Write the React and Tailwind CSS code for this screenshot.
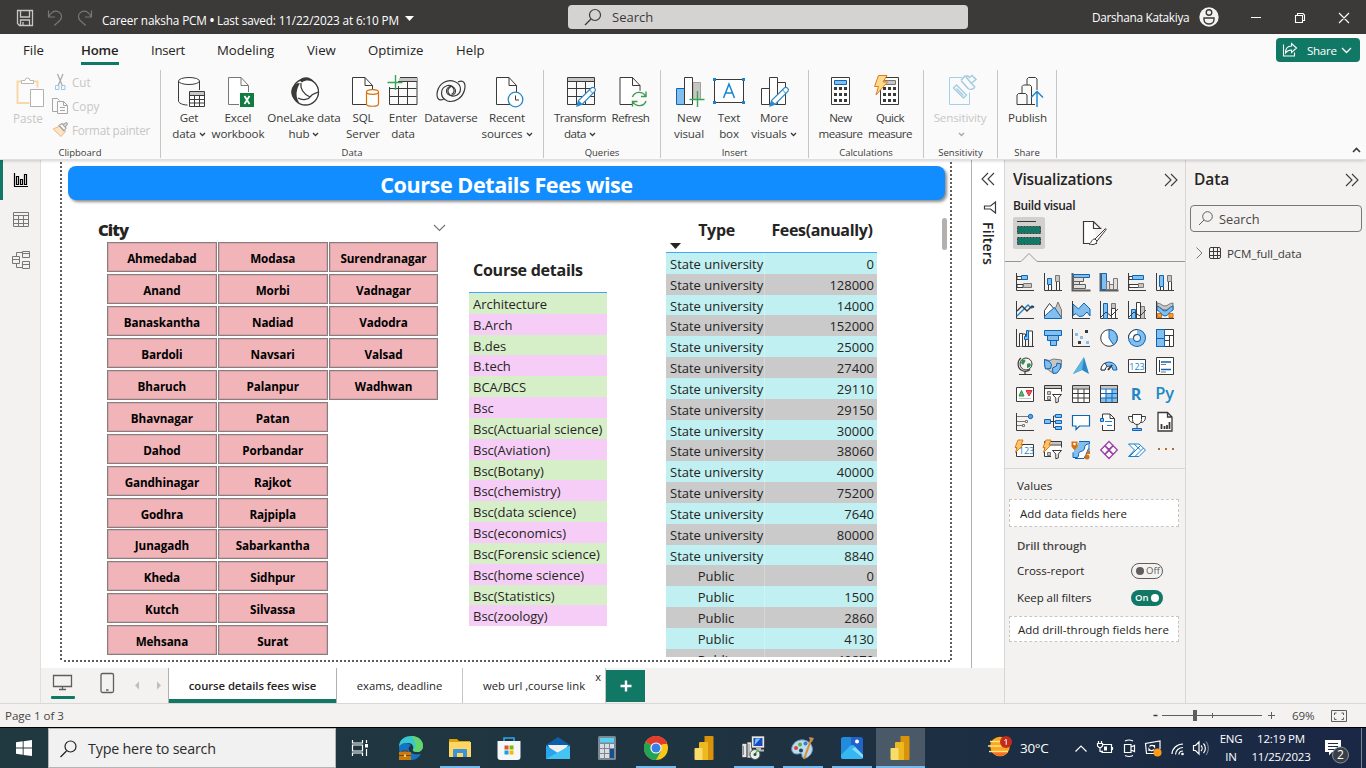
import React from "react";

const D = "#3b3a39";
const B = "#0a66b8";
const LB = "#83beec";
const G = "#797775";
const LG = "#c8c6c4";

/* Icon canvas: (x, y) is the origin of the drawing's own coordinates. */
function Ic({ x = 0, y = 0, w, h, className = "", children }) {
  return (
    <svg
      className={"shrink-0 " + className}
      width={w}
      height={h}
      viewBox={`${x} ${y} ${w} ${h}`}
      fill="none"
    >
      {children}
    </svg>
  );
}

/* ---------- title bar ---------- */
function TitleBar() {
  return (
    <div className="flex h-[34px] shrink-0 items-center bg-[#3b3a39] text-white">
      <Ic x={0} y={0} w={102} h={34}>
        <path d="M17.5 10.5h15v15h-13l-2-2z M20.5 10.5v6.500h9v-6.500 M20.500 25.500v-5.500h9v5.500 M23 25v-3" stroke="#c8c6c4" strokeWidth="1.300" />
        <path d="M48.500 10.500v6.500h6.500 M48.800 16.500c3-5 7-6 10-4.500c3.500 2 3.500 6 1 8.500l-5.500 5" stroke="#797775" strokeWidth="1.200" />
        <path d="M91.500 10.500v6.500h-6.500 M91.200 16.500c-3-5-7-6-10-4.500c-3.500 2-3.500 6-1 8.500l5.500 5" stroke="#797775" strokeWidth="1.200" />
      </Ic>
      <span className="w-[303px] pt-[6px] text-[11.8px] leading-4 whitespace-nowrap tracking-[-0.16px]">
        Career naksha PCM&nbsp;<span className="font-bold">•</span>&nbsp;Last saved: 11/22/2023 at 6:10 PM
      </span>
      <Ic w={10} h={6} className="mt-[3px]"><path d="M0 0h9L4.500 5z" fill="#fff" /></Ic>
      <div className="ml-[153px] flex h-[24px] w-[400px] items-center rounded-sm bg-[#d4d3d1] text-[#3b3a39]">
        <Ic w={44} h={24}>
          <circle cx="27" cy="10" r="5.500" stroke={D} strokeWidth="1.200" />
          <path d="M23 14l-6 6" stroke={D} strokeWidth="1.200" />
        </Ic>
        <span className="pt-px text-[13px]">Search</span>
      </div>
      <span className="ml-[124px] w-[107px] pt-px text-[11.8px] whitespace-nowrap tracking-[-0.3px]">Darshana Katakiya</span>
      <Ic x={1199} y={0} w={167} h={34}>
        <circle cx="1209" cy="17" r="9.700" fill="#f3f2f1" />
        <circle cx="1209" cy="12.500" r="2.800" stroke={D} strokeWidth="1.400" />
        <path d="M1204 18h10v1.500a5 4.500 0 0 1-10 0z" stroke={D} strokeWidth="1.400" />
        <path d="M1251 17.500h10 M1295.500 15.500h7v7h-7z M1297.500 15v-1.500h5.500l1.500 1.500v5.500h-1.500 M1339 13l10 10 M1349 13l-10 10" stroke="#fff" strokeWidth="1.100" />
      </Ic>
    </div>
  );
}

/* ---------- ribbon ---------- */
function Tabs() {
  return (
    <div className="flex h-9 text-[13.200px] text-[#252423]">
      <div className="flex pl-[23px] pt-[7px] leading-[18px]">
        <span className="w-[58px]">File</span>
        <span className="w-[70px]">
          <span className="inline-block h-[24px] w-[38px] border-b-[3px] border-[#117865] font-semibold tracking-[-0.2px]">Home</span>
        </span>
        <span className="w-[66px] tracking-[-0.25px]">Insert</span>
        <span className="w-[90px]">Modeling</span>
        <span className="w-[61px]">View</span>
        <span className="w-[88px]">Optimize</span>
        <span>Help</span>
      </div>
      <div className="mt-1 mr-1.5 ml-auto flex h-6 w-[84px] items-center rounded bg-[#117865] text-[11.600px] text-white">
        <Ic x={1276} y={38} w={31} h={24}>
          <path d="M1283.500 44.500v11.500h11v-3.500 M1291.500 43.500l5 4.500-5 4.500v-2.500c-3 0-4.500 1-6 3 0-4 2-7 6-7z" stroke="#fff" strokeWidth="1.100" />
        </Ic>
        <span className="w-[34px] pt-px tracking-[-0.3px]">Share</span>
        <Ic w={11} h={7}><path d="M1 1l4.500 4.500L10 1" stroke="#fff" strokeWidth="1.300" /></Ic>
      </div>
    </div>
  );
}

function Chevron({ c = D }) {
  return (
    <Ic w={7} h={5} className="mb-px ml-[3px] inline"><path d="M1 1l2.500 2.500L6 1" stroke={c} strokeWidth="1.300" /></Ic>
  );
}

function Item({ w, cx, a, b, arrow, muted, tight, children }) {
  return (
    <div className={`flex ${w} flex-col items-center pt-1 text-[11.600px] leading-4 whitespace-nowrap ${tight ? "tracking-[-0.5px]" : "tracking-[-0.13px]"} ${muted ? "text-[#c8c6c4]" : "text-[#3b3a39]"}`}>
      <Ic x={cx - 22} y={74} w={44} h={36}>{children}</Ic>
      <span>{a}</span>
      <span className="h-4">{b}{arrow && <Chevron c={muted ? "#a8a6a4" : D} />}</span>
    </div>
  );
}

function Group({ w, label, pad = "pr-px", children }) {
  return (
    <div className={`flex h-[88px] ${w} shrink-0 flex-col border-r border-[#c8c6c4]`}>
      <div className={`flex h-[76px] shrink-0 justify-center ${pad}`}>{children}</div>
      <div className="text-center text-[9.500px] leading-[14px] text-[#3b3a39]">{label}</div>
    </div>
  );
}

const doc = (x) => `M${x} 77.500h12.500l7.500 8v19h-20z M${x + 12.5} 77.500v8h7.500`;

function Pencil({ x, y }) {
  return (
    <g transform={`translate(${x} ${y})`}>
      <path d="M1 19l1.500-5.500L15.500.8c2-1.500 5 1.200 3.500 3.400L6.500 17z" fill="#fff" stroke="#2b88c8" strokeWidth="1.200" />
      <path d="M1 19l1.500-5.500 4 3.500z" fill="#2b88c8" />
      <path d="M13.500 3l3.500 3.500" stroke="#2b88c8" />
    </g>
  );
}

function Calc({ x, top = LB, ts = B }) {
  return (
    <g>
      <path d={`M${x + 0.5} 77.500h18v27h-18z`} fill="#fff" stroke={D} />
      <path d={`M${x + 3.5} 80.500h12v4h-12z`} fill={top} stroke={ts} />
      <path d={`M${x + 3} 88.500h13 M${x + 3} 94.500h13 M${x + 3} 100.500h13`} stroke={D} strokeWidth="3" strokeDasharray="3 2" />
    </g>
  );
}

function Ribbon() {
  return (
    <div className="relative z-10 h-[126px] shrink-0 border-b border-[#e1dfdd] bg-[#fafafa] shadow-[0_1px_3px_rgba(0,0,0,0.18)]">
      <Tabs />
      <div className="flex h-[88px]">
        <Group w="w-[161px]" label="Clipboard">
          <div className="flex w-[50px] flex-col items-center pt-1 pl-[6px] text-[11.700px] leading-4 text-[#c8c6c4]">
            <Ic x={6} y={74} w={44} h={36}>
              <path d="M24 81.500h-6.500v21.500h12 M31 81.500h6.500v6" stroke="#f8d7a8" strokeWidth="2" />
              <path d="M21.500 83.500v-3h3.500a2.500 2.500 0 0 1 5 0h3.500v3z" stroke="#b9b7b5" fill="#fff" />
              <path d="M30.500 89.500h13v17h-13z" stroke="#b3b1af" fill="#fff" />
            </Ic>
            <span>Paste</span>
          </div>
          <div className="flex flex-1 flex-col pt-px text-[11.700px] text-[#c8c6c4]">
            <div className="flex h-6 items-center">
              <Ic x={50} y={71} w={22} h={24}>
                <path d="M57.500 74l5 12 M63 74l-5 12" stroke="#a8a6a4" strokeWidth="1.200" />
                <path d="M55.500 85.500h3.500v4h-3.500z M61.500 85.500h3.500v4h-3.500z" stroke="#9cc7e4" />
              </Ic>Cut
            </div>
            <div className="flex h-6 items-center">
              <Ic x={50} y={95} w={22} h={24}>
                <path d="M58 111.500h-5.500v-13h5l2 2" stroke="#a8a6a4" />
                <path d="M57.500 101.500h6l4 4v8h-10z M63.500 101.500v4h4 M60 107.500h5 M60 110.500h5" stroke="#a8a6a4" />
              </Ic>Copy
            </div>
            <div className="flex h-6 items-center whitespace-nowrap tracking-[-0.25px]">
              <Ic x={50} y={119} w={22} h={24}>
                <path d="M53 129l7-3 5.500 5.500-4.500 5z" fill="#fbe3c3" stroke="#efb98a" />
                <path d="M59 125.500l3-2 4 4.500-2 3z M63.500 124l3.500-1.500 M63 125l3.500-2.500 1 1.500-2.500 3" stroke="#a8a6a4" strokeWidth="1.200" />
              </Ic>Format painter
            </div>
          </div>
        </Group>
        <Group w="w-[383px]" label="Data" pad="pr-0.5">
          <Item w="w-[44px]" cx={189} a="Get" b="data" arrow>
            <path d="M178.500 81v20c0 2 4 4 9 4 M199.500 81v9" stroke={D} />
            <ellipse cx="189" cy="81" rx="10.500" ry="3.500" stroke={D} fill="#fff" />
            <path d="M189.500 91.500h15v15h-15z" fill="#fff" stroke={D} />
            <path d="M190 92h14v3h-14z" fill={LG} />
            <path d="M189.500 95.500h15 M189.500 99.500h15 M189.500 103h15 M194.500 95v11 M199.500 95v11" stroke={D} />
          </Item>
          <Item w="w-[54px]" cx={238} a="Excel" b="workbook">
            <path d={doc(228.5)} stroke={G} fill="#fff" />
            <path d="M239.500 92.500h15v15h-15z" fill="#107c41" stroke="#fafafa" />
            <path d="M244.500 96l5 8 M249.500 96l-5 8" stroke="#fff" strokeWidth="1.800" />
          </Item>
          <Item w="w-[78px]" cx={304} a="OneLake data" b="hub" arrow>
            <circle cx="305.500" cy="92" r="13" stroke={D} strokeWidth="1.300" fill="#fff" />
            <path d="M299.500 80.500c3-4.500 11-4.500 14.500 1.500-4-2-9-2-12 .5z" fill={D} />
            <path d="M298 83c-6 2-8.500 8-5.500 14 1.500 3 4 4.500 6.500 5.500-2.500-4-3-9-2-12 .5-3 1.500-5 3-7z" fill={D} />
            <path d="M301 83c-1 5 2 11 9 14 3-4 5-3 8-5 M298 98c5 3 11 1 12-1" stroke={D} strokeWidth="1.300" />
          </Item>
          <Item w="w-[40px]" cx={363} a="SQL" b="Server">
            <path d={doc(352.5)} stroke={D} fill="#fff" />
            <path d="M366.500 92v12c0 3 12 3 12 0v-12" stroke="#d8700c" strokeWidth="1.200" fill="#fff" />
            <ellipse cx="372.500" cy="92" rx="6" ry="2.300" stroke="#d8700c" strokeWidth="1.200" fill="#fff" />
          </Item>
          <Item w="w-[40px]" cx={403} a="Enter" b="data">
            <path d="M389.500 87v17.500h27.500v-27h-17 M398 81.500h19 M389.500 88.500h27 M389.500 96.500h27 M398.500 86v18 M407.500 81v23" stroke={D} />
            <path d="M399 78h18v3h-18z" fill={LG} />
            <path d="M395.500 75v15 M387.500 82.500h15" stroke="#33a853" strokeWidth="1.400" />
          </Item>
          <Item w="w-[56px]" cx={451} a="Dataverse" b="">
            <g stroke={D} strokeWidth="1.200">
              <path d="M444 99c-6 3-8-2-6.500-8 2-8 10-12 17-9.500 8 3 8 12 0 14.500-6 1-9-6-4-9" />
              <path d="M458 82c6-3 8 2 6.500 8-2 8-10 13-17 11-8-3-8-13 0-15.500 6-1 9 6 4 9" />
              <circle cx="451" cy="91" r="4.500" />
            </g>
          </Item>
          <Item w="w-[56px]" cx={507} a="Recent" b="sources" arrow>
            <path d={doc(496.5)} stroke={D} fill="#fff" />
            <circle cx="515.500" cy="99.500" r="7.300" stroke="#2b88c8" strokeWidth="1.300" fill="#fff" />
            <path d="M515.500 95.500v4.500h3.500" stroke={D} />
          </Item>
        </Group>
        <Group w="w-[117px]" label="Queries">
          <Item w="w-[58px]" cx={580} a="Transform" b="data" arrow tight>
            <path d="M567.500 77.500h27v27h-27z M567.500 81.500h27 M567.500 88.500h27 M567.500 96.500h27 M576.500 81v23 M585.500 81v23" stroke={D} />
            <path d="M568 78h26v3h-26z" fill={LG} />
            <Pencil x={576} y={87} />
          </Item>
          <Item w="w-[43px]" cx={630.5} a="Refresh" b="" tight>
            <path d={doc(619.5)} stroke={D} fill="#fff" />
            <circle cx="638.500" cy="99" r="8.500" fill="#fafafa" />
            <path d="M632 97c2-6 10-6 13-1 M645.500 91.500v5h-5 M645.500 101c-2 6-10 6-13 1 M632 106.500v-5h5" stroke="#3c9a50" strokeWidth="1.400" />
          </Item>
        </Group>
        <Group w="w-[148px]" label="Insert">
          <Item w="w-[40px]" cx={689} a="New" b="visual">
            <path d="M676.500 88.500h8v16h-8z" fill={LB} stroke={B} />
            <path d="M693 82.500h7.500v17h-7.500z" fill={LG} stroke="#a19f9d" />
            <path d="M684.500 77.500h8v27h-8z" fill="#fff" stroke={D} />
            <path d="M697.500 91v16 M689.500 99.500h15" stroke="#33a853" strokeWidth="1.400" />
          </Item>
          <Item w="w-[40px]" cx={729} a="Text" b="box">
            <path d="M714.500 79.500h29v23h-29z" stroke={D} fill="#fff" />
            <path d="M713 78h3v3h-3z M742 78h3v3h-3z M713 101h3v3h-3z M742 101h3v3h-3z" fill="#1684cf" />
            <path d="M723.500 98l5.500-14 5.500 14 M725.500 93h7" stroke="#1684cf" strokeWidth="1.500" />
          </Item>
          <Item w="w-[50px]" cx={774} a="More" b="visuals" arrow>
            <path d="M761.500 88.500h8v16h-8z M777.500 82.500h8v22h-8z M769.500 77.500h8v27h-8z" stroke={D} fill="#fff" />
            <Pencil x={769} y={87} />
          </Item>
        </Group>
        <Group w="w-[115px]" label="Calculations">
          <Item w="w-[49px]" cx={841} a="New" b="measure" tight>
            <Calc x={831} />
          </Item>
          <Item w="w-[50px]" cx={890} a="Quick" b="measure" tight>
            <Calc x={880} top={LG} ts={G} />
            <path d="M878.500 75.500h8.500l-4 6.500h4.500l-11.500 13 2.500-8.500h-4z" fill="#fcd98c" stroke="#e07b17" />
          </Item>
        </Group>
        <Group w="w-[74px]" label="Sensitivity">
          <Item w="w-[60px]" cx={960} a="Sensitivity" b="" arrow muted>
            <path d="M962 77.500h-12.500v27h20v-12" stroke="#a3d0e8" />
            <path d="M953.500 88l3-3 10 10-3 3z M956.500 88.500l7 7" stroke="#a3cbe0" strokeWidth="1.300" />
            <path d="M961 80.500l4-4.500h3l2 2 M970 77l2-1.500 4 4-5 4 M961 80.500l7 8c2 1.500 5 1 7-1.500 M975 87l-4-4-5-6" stroke="#a3cbe0" strokeWidth="1.500" />
          </Item>
        </Group>
        <Group w="w-[59px]" label="Share" pad="pl-px">
          <Item w="w-[50px]" cx={1027.5} a="Publish" b="">
            <path d="M1026.500 85v-6l1.500-1.500h7l1.500 1.500v11 M1021.500 93v-6.500l1.500-1.500h6.500l1.500 1.500v18 M1016.500 104.500v-9.500l1.500-1.500h7l1.500 1.500v9.500z M1026.500 104.500h8" stroke={D} />
            <path d="M1036.500 107v-15.500 M1030.500 97.500l6-6 6 6" stroke="#1684cf" strokeWidth="1.400" />
          </Item>
        </Group>
        <div className="flex flex-1 items-end justify-end pr-[5px] pb-[5px]">
          <Ic w={9} h={6}><path d="M1 5l3.500-3.500L8 5" stroke={D} strokeWidth="1.600" /></Ic>
        </div>
      </div>
    </div>
  );
}

/* ---------- left rail ---------- */
function Rail() {
  return (
    <div className="flex w-[41px] shrink-0 flex-col border-r border-[#e1dfdd] bg-[#f3f2f1]">
      <div className="h-10 w-full border-l-[3px] border-[#117865]">
        <Ic x={3} y={160} w={37} h={40}>
          <path d="M14.500 173v13.500h13.500" stroke="#000" strokeWidth="1.200" />
          <path d="M16.500 176.500h2v8h-2z M20.500 179.500h2v5h-2z M24.500 174.500h2v10h-2z" stroke="#000" strokeWidth="1.200" />
        </Ic>
      </div>
      <Ic x={0} y={200} w={40} h={40}>
        <path d="M13.500 212.500h15v14h-15z M13.500 215.500h15 M13.500 219.500h15 M13.500 223.500h15 M18.500 215v11 M23.500 215v11" stroke={G} />
      </Ic>
      <Ic x={0} y={240} w={40} h={40}>
        <path d="M12.500 256.500h7v7h-7z M12.500 259.500h7 M22.500 251.500h7v6h-7z M22.500 253.500h7 M22.500 261.500h7v7h-7z M22.500 264.500h7 M16.500 256v-3.500h6 M16.500 264v3.500h6" stroke={G} />
      </Ic>
    </div>
  );
}

/* ---------- report canvas ---------- */
const cities = [
  ["Ahmedabad", "Anand", "Banaskantha", "Bardoli", "Bharuch", "Bhavnagar", "Dahod", "Gandhinagar", "Godhra", "Junagadh", "Kheda", "Kutch", "Mehsana"],
  ["Modasa", "Morbi", "Nadiad", "Navsari", "Palanpur", "Patan", "Porbandar", "Rajkot", "Rajpipla", "Sabarkantha", "Sidhpur", "Silvassa", "Surat"],
  ["Surendranagar", "Vadnagar", "Vadodra", "Valsad", "Wadhwan"],
];
const courses = ["Architecture", "B.Arch", "B.des", "B.tech", "BCA/BCS", "Bsc", "Bsc(Actuarial science)", "Bsc(Aviation)", "Bsc(Botany)", "Bsc(chemistry)", "Bsc(data science)", "Bsc(economics)", "Bsc(Forensic science)", "Bsc(home science)", "Bsc(Statistics)", "Bsc(zoology)"];
const S = "State university";
const P = "Public";
const fees = [[S, 0], [S, 128000], [S, 14000], [S, 152000], [S, 25000], [S, 27400], [S, 29110], [S, 29150], [S, 30000], [S, 38060], [S, 40000], [S, 75200], [S, 7640], [S, 80000], [S, 8840], [P, 0], [P, 1500], [P, 2860], [P, 4130], [P, 40870]];

const dotsV = "w-0.5 shrink-0 bg-[repeating-linear-gradient(to_bottom,transparent_0_2px,#605e5c_2px_4px)]";

function Report() {
  return (
    <div className="flex h-[508px] bg-white pl-[19px]">
      <div className={dotsV + " h-[502px]"} />
      <div className="flex h-[502px] w-[888px] flex-col pl-[6px]">
        <div className="mt-[6px] h-[34px] w-[877px] shrink-0 rounded-[8px] bg-[#118dff] pt-[2px] text-center text-[21.600px] leading-[34px] font-bold text-white shadow-[2px_2px_3px_rgba(0,0,0,0.45)] tracking-[-0.45px]">
          Course Details Fees wise
        </div>
        <div className="flex h-[459px]">
          <div className="w-[401px] pt-[20px] pl-[30px]">
            <div className="flex h-[22px] items-center justify-between pr-[23px]">
              <span className="-mt-px text-[16.500px] font-extrabold tracking-[-0.9px] text-[#252423]">City</span>
              <Ic w={13} h={8} className="mb-1.5"><path d="M1 1l5.500 5.500L12 1" stroke={G} strokeWidth="1.200" /></Ic>
            </div>
            <div className="flex gap-px pl-[9px]">
              {cities.map((col, i) => (
                <div key={i} className="flex w-[109.8px] flex-col gap-[1.95px]">
                  {col.map((c) => (
                    <div key={c} className="h-[30px] border border-[#8b7d7e] bg-[#f0b4b9] pt-px text-center text-[11.700px] leading-[28px] font-bold tracking-[-0.1px] text-black shadow-[inset_0_0_0_1px_#d8a5a9]">
                      {c}
                    </div>
                  ))}
                </div>
              ))}
            </div>
          </div>
          <div className="w-[138px] pt-[54px]">
            <div className="h-[39px] border-b border-[#118dff]/80 pl-1 text-[16.100px] leading-[32px] font-bold tracking-[-0.3px] text-[#252423]">Course details</div>
            {courses.map((c, i) => (
              <div key={c} className={`h-[20.830px] pl-1 text-[13px] leading-[22px] whitespace-nowrap tracking-[-0.02px] text-[#252423] ${i % 2 ? "bg-[#f6cdf6]" : "bg-[#d7efc8]"}`}>{c}</div>
            ))}
          </div>
          <div className="ml-[59px] h-[456.500px] w-[211px] overflow-hidden pt-[15px]">
            <div className="relative flex h-[38px] border-b border-[#118dff]/80 pt-[3px] text-center text-[16px] leading-[24px] font-bold text-[#252423]">
              <span className="w-[101px] tracking-[-0.3px]">Type</span>
              <span className="flex-1 tracking-[-0.35px]">Fees(anually)</span>
              <Ic w={12} h={7} className="absolute bottom-0.5 left-1"><path d="M0 0h11L5.500 6z" fill="#252423" /></Ic>
            </div>
            {fees.map(([t, f], i) => (
              <div key={i} className={`flex h-[20.830px] text-[13px] leading-[22px] text-[#252423] ${i % 2 ? "bg-[#cacaca]" : "bg-[#c0f0f1]"}`}>
                <span className="w-[99px] border-r border-white/25 pl-1 pr-0.5 text-center whitespace-nowrap">{t}</span>
                <span className="flex-1 pr-[3px] text-right">{f}</span>
              </div>
            ))}
          </div>
          <div className="mt-[18px] ml-[65px] h-8 w-[5px] rounded-full bg-[#b3b0ad]" />
        </div>
        <div className="-ml-[6px] mt-auto h-0.5 w-[888px] shrink-0 bg-[repeating-linear-gradient(to_right,transparent_0_2px,#605e5c_2px_4px)]" />
      </div>
      <div className={dotsV + " h-[502px]"} />
      <div className="ml-[19px] flex h-full w-[34px] flex-col items-center border-l border-[#b3b0ad] pt-3">
        <Ic x={981} y={172} w={14} h={14}>
          <path d="M988 173l-6 6 6 6 M994 173l-6 6 6 6" stroke={D} strokeWidth="1.100" />
        </Ic>
        <Ic x={983} y={200} w={14} h={15} className="mt-3.5 ml-1">
          <path d="M995.500 202v11l-5-4h-6v-3h6z" stroke={D} strokeWidth="1.200" />
        </Ic>
        <span className="mt-[7px] text-[14px] leading-[18px] font-semibold tracking-[0.2px] text-[#252423] [writing-mode:vertical-rl]">Filters</span>
      </div>
    </div>
  );
}

function PageTabs() {
  return (
    <div className="flex h-[35px] bg-[#f3f2f1] text-[11.300px] text-[#252423]">
      <Ic x={41} y={668} w={127} h={35}>
        <path d="M53.500 675.500h18v11h-18z M59 689.500h7 M62.500 687v2" stroke="#605e5c" strokeWidth="1.300" />
        <rect x="51" y="696" width="24" height="3" rx="1" fill="#117865" />
        <rect x="101" y="673.500" width="12.500" height="19" rx="1.500" stroke="#605e5c" strokeWidth="1.300" />
        <path d="M106 690h2.500" stroke="#605e5c" strokeWidth="1.500" />
        <path d="M139 681.500v8l-4-4z M157 681.500v8l4-4z" fill="#c0bebc" />
      </Ic>
      <div className="h-full w-[169px] border-x border-[#b3b0ad] bg-white">
        <div className="h-full border-b-4 border-[#117865] text-center leading-[35px] font-semibold tracking-[-0.05px]">course details fees wise</div>
      </div>
      <div className="w-[126px] border-r border-[#c8c6c4] bg-white text-center leading-[35px]">exams, deadline</div>
      <div className="relative w-[143px] border-r border-[#c8c6c4] bg-white text-center leading-[35px] whitespace-nowrap">
        web url ,course link
        <span className="absolute top-px right-1 text-[11px] leading-4">x</span>
      </div>
      <div className="mt-[2px] flex h-8 w-[39px] items-center justify-center bg-[#117865]">
        <Ic w={12} h={12}><path d="M6 .5v11 M.5 6h11" stroke="#fff" strokeWidth="2.400" /></Ic>
      </div>
    </div>
  );
}

/* ---------- visualization gallery ---------- */
const AX = <path d="M.5 0v17.500H18" stroke={D} />;
const bolt = <path d="M2-1h5L5 4h2L-.5 11.500 1 6.500h-2z" fill="#fcc66b" stroke="#e07b17" />;
const funnel = <path d="M8.500 9.500h9l-3.200 3.500v4l-2.500.8v-4.800z" fill="#fff" stroke={D} />;
const gallery = [
  <>{AX}<path d="M1 3.500h5v3h-5z M1 11.500h6v3H1z" stroke={D} fill="#fff" /><path d="M5.500 2.500h6v4h-6z" fill={LB} stroke={B} /><path d="M7.500 10.500h8v4h-8z" fill={LG} stroke={G} /></>,
  <>{AX}<path d="M4.500 11.500h3v6h-3z M12.500 8.500h3v9h-3z" stroke={D} fill="#fff" /><path d="M3.500 5.500h4v6h-4z" fill={LB} stroke={B} /><path d="M11.500 2.500h4v6h-4z" fill={LG} stroke={G} /></>,
  <><path d="M.5 0v17.500H18.500" stroke="#605e5c" strokeWidth="2" /><path d="M1.500 1.500h16v3h-16z" fill={LB} stroke={B} /><path d="M1.500 4.500h10v4h-10z M1.500 8.500h6v3h-6z M1.500 11.500h12v4h-12z" fill="#e1dfdd" stroke="#605e5c" /></>,
  <><path d="M.5 0v17.500H18.500" stroke="#605e5c" strokeWidth="2" /><path d="M1.500.5h5v16h-5z" fill={LB} stroke={B} /><path d="M6.500 8.500h3v8h-3z M9.500 11.500h4v5h-4z M13.500 5.500h4v11h-4z" fill="#e1dfdd" stroke={G} /></>,
  <>{AX}<path d="M1 3.500h4v3h-4z M1 11.500h10v3H1z" stroke={D} fill="#fff" /><path d="M4.500 2.500h11v4h-11z" fill={LB} stroke={B} /><path d="M10.500 10.500h5v4h-5z" fill={LG} stroke={G} /></>,
  <>{AX}<path d="M4.500 13.500h3v4h-3z M12.500 8.500h3v9h-3z" stroke={D} fill="#fff" /><path d="M3.500 2.500h4v11h-4z" fill={LB} stroke={B} /><path d="M11.500 2.500h4v6h-4z" fill={LG} stroke={G} /></>,
  <>{AX}<path d="M1 15l5-5 6-6 3 3 3-1" stroke="#1684cf" strokeWidth="1.400" /><path d="M1 10l5-5 5 5 5-5 2 1" stroke={D} strokeWidth="1.400" /></>,
  <><path d="M8 16l6-15 3.500 8v8h-9z" fill={LG} stroke={G} /><path d="M.5 16.500v-7l5-7 6 7" fill="#fff" stroke={D} /><path d="M.5 17.500v-2l4-4 6-5 7 10v1z" fill={LB} stroke={B} /></>,
  <><path d="M1 3l5.500 5L12 2l6 6v7l-3-4-4 4-4 .5-3-3-3 2z" fill={LB} stroke={B} />{AX}</>,
  <>{AX}<path d="M3.500 2.500h4v15h-4z" fill={LB} stroke={B} /><path d="M11.500 2.500h4v5h-4z" fill={LG} stroke={G} /><path d="M11.500 7.500h4v10h-4z" fill="#fff" stroke={D} /><path d="M1 16l5-5 5 4 7-7" stroke={D} /></>,
  <>{AX}<path d="M3.500 8.500h4v9h-4z" fill={LB} stroke={B} /><path d="M12.500 5.500h4v12h-4z" fill={LG} stroke={G} /><path d="M8.500 1.500h4v16h-4z" fill="#fff" stroke={D} /><path d="M1 16l5-5 6 4 6-6" stroke={D} /></>,
  <><path d="M1.500 12.500h4v4h-4z M13 12.500h4v4h-4z M1.500 6h3v3h-3z M14 6h3v3h-3z" fill="#f39b3d" stroke="#d8700c" /><path d="M1 2c4 0 5 3 8 3s4-3 8-3v4c-4 0-5 3-8 3s-4-3-8-3z" fill={LG} stroke={G} /><path d="M1 5c4 1 5 5 8 5s4-4 8-5v4c-3 1-5 6-8 6s-5-5-8-6z" fill={LB} stroke={B} />{AX}</>,
  <>{AX}<path d="M3.500 17.500v-13h3v13 M6.500 5h3v12.500 M12.500 17v-13 M16.500 17v-15h-4" stroke={D} fill="#fff" /><path d="M10.500 1.500h2v9h-4v-3h2z" fill={LB} stroke={B} /></>,
  <><path d="M.5 1.500h17v5h-17z M3.500 6.500h11v5h-11z M6.500 11.500h6v5h-6z" fill={LB} stroke={B} /></>,
  <>{AX}<path d="M13 1h3v3h-3z M6 12h3v3h-3z" fill={D} /><path d="M3 4h3v3H3z M8 7h3v3H8z M14 12h3v3h-3z" fill={LB} /></>,
  <><circle cx="9" cy="9" r="8.300" fill="#fff" stroke={D} /><path d="M9 .7a8.300 8.300 0 0 1 4.500 15.200L9 9z" fill={LB} stroke={B} /></>,
  <><circle cx="9" cy="9" r="6" stroke={B} strokeWidth="6" /><circle cx="9" cy="9" r="6" stroke={LB} strokeWidth="4" /><path d="M9 3a6 6 0 0 0-6 6" stroke={D} strokeWidth="6" /><path d="M9 3a6 6 0 0 0-6 6" stroke="#fff" strokeWidth="4" /></>,
  <><path d="M.5.5h17v17h-17z M9 6.500h9 M13.500 6v11 M9 11.500h5" fill="#fff" stroke={D} /><path d="M.5.5h8v9h-8z M.5 9.500h8v8h-8z" fill={LB} stroke={B} /></>,
  <><circle cx="10" cy="7" r="6" fill="#f3f2f1" stroke={D} /><path d="M6 3c3-1 4 0 3 2l-2 3-2-2z M11 7c3-2 5 0 3 3l-3 1z" fill="#2f8f4e" /><path d="M5 1c-4 3-4 10 1 12.500 3 1.500 6 1 8-1 M9 14.500v3 M3 17.500h13" stroke={D} strokeWidth="1.200" /></>,
  <><path d="M.5 2.500l5 1 4-1.500 8 1-.5 8-5 5-5-1-6-5z" fill={LG} stroke={G} /><path d="M.5 2.500l5 2 2 3-1 4-5 .5c-1-3-1-6-1-9.500z M8.500 11l4-2 .5-3 4 1-1 5-3 4-4 .5z" fill={LB} stroke={B} /></>,
  <><path d="M12 0l5 17-7-4-9 4z" fill="#2b88c8" /><path d="M12 0L10 13l-9 4z" fill="#5fb6de" /></>,
  <><path d="M1 13a8 8 0 0 1 16 0h-4a4 4 0 0 0-8 0z" fill={LB} stroke={B} /><path d="M1 13a8 8 0 0 1 4-7l2 3.500a4 4 0 0 0-2 3.500z" fill="#fff" stroke={D} /><path d="M8 13l4-5" stroke={D} strokeWidth="2" /></>,
  <><path d="M.5 2.500h17v13h-17z" fill="#fff" stroke={D} /><text x="9" y="12.500" fontSize="9" textAnchor="middle" fill="#1684cf">123</text></>,
  <><path d="M.5.5h17v17h-17z" fill="#fff" stroke={D} /><path d="M3.500 3v12" stroke={D} /><path d="M5 5h10 M5 12.500h10" stroke={B} strokeWidth="1.500" /><path d="M5 7.500h5 M5 15h5" stroke={G} /></>,
  <><path d="M.5 2.500h17v14h-17z" fill="#fff" stroke={D} /><path d="M3 11l2.500-5.500L8 11z" fill="#5fb577" stroke="#2f8f4e" /><path d="M10 5.500h6L13 11z" fill="#e8575a" stroke="#d13438" /><path d="M3 13.500h12" stroke={LG} /></>,
  <><path d="M7 15.500H.5v-15h17v6" fill="#fff" stroke={D} /><path d="M1 1h16v2.500H1z" fill={LG} /><path d="M.5 3.500h17" stroke={D} /><path d="M3.500 6.500h3v3h-3z M3.500 11.500h3v3h-3z" fill={LG} stroke={G} />{funnel}</>,
  <><path d="M.5.500h17v17h-17z" fill="#fff" stroke={D} /><path d="M1 1h16v2.500H1z" fill={LG} /><path d="M.5 4h17 M.5 8.500h17 M.5 13h17 M6 4v13 M12 4v13" stroke={D} /></>,
  <><path d="M.5.500h17v17h-17z" fill="#fff" stroke={D} /><path d="M1 1h16v2.500H1z" fill={LG} /><path d="M12 4h5v13H1v-4h5V9h6z" fill={LB} /><path d="M.5 4h17 M.5 8.500h17 M.5 13h17 M6 4v13 M12 4v13" stroke={B} /><path d="M.5.500h17v17h-17z" stroke={D} /></>,
  <text x="8" y="14.500" fontSize="16" fontWeight="700" textAnchor="middle" fill="#1e88c7">R</text>,
  <text x="8.500" y="13.500" fontSize="16.500" fontWeight="600" textAnchor="middle" letterSpacing="-0.3" fill="#1e88c7">Py</text>,
  <>{AX}<path d="M1 3.500h12 M1 8.500h8 M1 12.500h5" stroke={G} /><circle cx="14.500" cy="3.500" r="2.200" fill="#5aa5dd" stroke={B} /><path d="M9.500 7.500h2v2h-2z M6.500 11.500h2v2h-2z" fill="#fff" stroke={G} /></>,
  <><path d="M6 8.500h6 M9.500 3v11.500 M9.500 3h3 M9.500 14.500h3" stroke={D} /><path d="M.5 6.500h6v4h-6z M11.500 1.500h6v3h-6z M11.500 7.500h6v3h-6z M11.500 13.500h6v3h-6z" fill={LB} stroke={B} /></>,
  <path d="M.5 2.500h17v10.500h-10l-3.500 3.500V13h-3.500z" fill="#fff" stroke={B} strokeWidth="1.200" />,
  <><path d="M2.500 12v5.500h12v-12l-4.500-4.500h-7.500v4 M10 1v4.500h4.500" fill="#fff" stroke={D} /><path d="M5 8.500h7 M7 12.500h5" stroke="#1684cf" /><path d="M.5 5.500h3v3h-3z" fill={LB} stroke={B} /></>,
  <><path d="M4.500 1.500h9v5c0 3-2 5-4.500 5s-4.500-2-4.500-5z M4.500 3.500h-4c0 4 2 6 4.500 6 M13.500 3.500h4c0 4-2 6-4.500 6 M9 11.500v4" fill="#fff" stroke={D} /><path d="M4.500 15.500h9v2h-9z" fill={LB} stroke={B} /></>,
  <><path d="M2 -.5h9.500l4.500 4.500v14H2z M11.500 0v4h4.500" fill="#fff" stroke={D} strokeWidth="1.300" /><path d="M5.500 11v5 M8.500 13v3 M11 12v4 M13.500 9v7" stroke={D} strokeWidth="1.800" /></>,
  <><path d="M.5 3.500h17v12h-17z" fill="#fff" stroke={D} /><text x="10.500" y="13" fontSize="9" textAnchor="middle" fill="#1684cf">123</text>{bolt}</>,
  <><path d="M7 15.500H.5v-15h17v6" fill="#fff" stroke={D} /><path d="M1 1h16v2.500H1z" fill={LG} /><path d="M.5 4h17" stroke={D} /><path d="M3.500 11.500h3v3h-3z" fill={LG} stroke={G} />{funnel}{bolt}</>,
  <><path d="M5 1h12v8l-3 8H1V9z" fill="#fff" /><path d="M7 .5h10.500v2.500c-3 0-5 1-5 4s-3 3-5 4c-2 2 0 4-2 5.500H1v-5" fill={LB} stroke={B} /><path d="M17 4v6 M3 17.500h9l2-4 2.500-6" stroke={B} /><path d="M-.5.5h6v5l-3 4-3-4z" fill="#d8700c" /><circle cx="2.500" cy="3" r="1.300" fill="#fff" /><path d="M15 10h3v3h-3z" fill="#d8700c" /><circle cx="15" cy="16" r="2.500" fill="#d8700c" /></>,
  <path d="M9 .5l4 4-4 4-4-4z M4.800 4.800l4 4.200-4 4.200-4.100-4.200z M13.200 4.800l4.100 4.200-4.100 4.200-4-4.200z M9 9.500l4 4-4 4-4-4z" fill="#fff" stroke="#9b3fa5" strokeWidth="1.300" />,
  <path d="M.5 3h10.500l6.500 6-6.500 6.500H.5l6-6.500z M6 3l6.500 6 M2 15l10-10 M7.500 15l8-8" fill="#fff" stroke="#1684cf" />,
  <path d="M2 7h2v2H2z M9 7h2v2H9z M16 7h2v2h-2z" fill="#b46a2c" />,
];

function DoubleChevron() {
  return (
    <Ic w={14} h={14}><path d="M1 1l6 6-6 6 M7 1l6 6-6 6" stroke={D} strokeWidth="1.100" /></Ic>
  );
}

function Visualizations() {
  return (
    <div className="flex w-[182px] shrink-0 flex-col border-x border-[#d8d6d4] bg-[#f3f2f1] text-[#252423]">
      <div className="flex h-[39px] items-center justify-between pr-[7px] pl-2">
        <span className="pt-px text-[15.500px] font-semibold tracking-[-0.25px]">Visualizations</span>
        <DoubleChevron />
      </div>
      <div className="h-[18px] pl-2 text-[12px] leading-[14px] font-semibold tracking-[-0.35px]">Build visual</div>
      <Ic x={1005} y={217} w={180} h={47}>
        <rect x="1013" y="217" width="32" height="32" rx="2" fill="#d2d0ce" />
        <path d="M1017 221.500h19" stroke={D} />
        <path d="M1017.500 226.500h23v7h-23z M1017.500 237.500h23v7h-23z" fill="#117865" stroke={D} strokeDasharray="2 1" />
        <path d="M1097 243.500h-13.500v-22h10l7 7h-7v-7" stroke={D} strokeWidth="1.200" fill="#fff" />
        <path d="M1089 244c3-1 2-5 6-5l2 2c-1 4-4 4-8 3z M1095 239l10-10c2-1 1 1 0 2l-8 10" stroke={D} fill="#fff" />
        <path d="M1005 261.500h16l8-8 8 8h148" stroke="#979593" />
      </Ic>
      <div className="grid grid-cols-[repeat(6,18px)] gap-[10px] pt-[9px] pl-[11px]">
        {gallery.map((g, i) => (
          <Ic key={i} w={18} h={18} className="overflow-visible">{g}</Ic>
        ))}
      </div>
      <div className="mt-[9px] border-t border-[#d8d6d4] px-1 text-[11.500px] leading-4">
        <div className="pt-[9px] pl-2">Values</div>
        <div className="mt-[5px] h-[28px] w-[170px] border border-dashed border-[#c8c6c4] bg-white pl-2.5 leading-[27px] tracking-[-0.03px]">Add data fields here</div>
        <div className="pt-[11px] pl-2 font-semibold tracking-[-0.1px] text-[#484644]">Drill through</div>
        <div className="mt-[9px] flex items-center justify-between pr-[18px] pl-2">
          Cross-report
          <div className="flex h-4 w-8 items-center rounded-full border border-[#605e5c] pl-1 text-[9.500px] leading-3 text-[#605e5c]">
            <span className="mr-0.5 h-2 w-2 rounded-full bg-[#605e5c]" />Off
          </div>
        </div>
        <div className="mt-[11px] flex items-center justify-between pr-[18px] pl-2">
          <span className="tracking-[-0.08px]">Keep all filters</span>
          <div className="flex h-4 w-8 items-center justify-between rounded-full bg-[#117865] pr-1 pl-1 text-[9.500px] leading-3 font-semibold text-white">
            On<span className="h-2 w-2 rounded-full bg-white" />
          </div>
        </div>
        <div className="mt-[10px] h-[26px] w-[170px] border border-dashed border-[#c8c6c4] bg-white pl-2 leading-[26px] whitespace-nowrap">Add drill-through fields here</div>
      </div>
    </div>
  );
}

function DataPane() {
  return (
    <div className="flex flex-1 flex-col bg-[#f3f2f1] pl-1 text-[#252423]">
      <div className="flex h-[39px] items-center justify-between pr-[7px] pl-1">
        <span className="pt-px text-[15.500px] font-semibold tracking-[-0.1px]">Data</span>
        <DoubleChevron />
      </div>
      <div className="mt-[6px] flex h-[27px] w-[172px] items-center rounded-sm border border-[#797775] text-[12.800px] text-[#484644]">
        <Ic x={1190} y={206} w={28} h={25}>
          <circle cx="1206.500" cy="216.500" r="4.800" stroke="#605e5c" />
          <path d="M1203 220l-5 5" stroke="#605e5c" />
        </Ic>
        <span className="pt-0.5">Search</span>
      </div>
      <div className="mt-3 flex h-[18px] items-center text-[11.600px] text-[#3b3a39]">
        <Ic x={1190} y={244} w={37} h={18}>
          <path d="M1196.500 247.500l5.500 5.500-5.500 5.500" stroke={G} />
          <rect x="1209.500" y="247.500" width="11" height="11" rx="1.500" stroke={D} />
          <path d="M1209.500 251.500h11 M1209.500 255.500h11 M1213.500 248v10 M1217.500 248v10" stroke={D} />
        </Ic>
        <span className="pt-0.5 tracking-[-0.1px]">PCM_full_data</span>
      </div>
    </div>
  );
}

function StatusBar() {
  return (
    <div className="flex h-6 shrink-0 items-center border-t border-[#dad8d6] bg-[#f3f2f1] text-[11.600px] text-[#484644]">
      <span className="flex-1 pl-[5px] tracking-[-0.05px]">Page 1 of 3</span>
      <Ic x={1150} y={704} w={142} h={23}>
        <path d="M1153.500 715.500h4" stroke={D} strokeWidth="1.500" />
        <path d="M1162 715.500h100 M1212.500 713v5 M1268 715.500h7 M1271.500 712v7" stroke="#605e5c" />
        <path d="M1193 710h4v11h-4z" fill="#605e5c" />
      </Ic>
      <span className="w-[37px] tracking-[-0.15px]">69%</span>
      <Ic x={1329} y={704} w={37} h={23}>
        <path d="M1331.500 710.500h15v11h-15z" stroke="#605e5c" />
        <path d="M1334.500 715v-2h2 M1341.500 713h2v2 M1343.500 717.500v2h-2 M1336.500 719.500h-2v-2" stroke="#605e5c" />
      </Ic>
    </div>
  );
}

/* ---------- taskbar ---------- */
const powerBi = (
  <g transform="translate(-3.500 0)">
    <path d="M15 0h8a1 1 0 0 1 1 1v22a1 1 0 0 1-1 1h-8z" fill="#d9930a" />
    <path d="M9.500 7a1 1 0 0 1 1-1h7a1 1 0 0 1 1 1v17h-9z" fill="#edb920" />
    <path d="M5 13a1 1 0 0 1 1-1h6a1 1 0 0 1 1 1v11H6a1 1 0 0 1-1-1z" fill="#f8dc6a" />
  </g>
);

const apps = [
  { el: <><path d="M0 11C0 4 5 0 12 0s12 4 12 10c0 4-3 6-6 6-3 0-5-1-4-3 1-3-1-6-5-6s-7 2-9 4z" fill="#39c8d0" /><path d="M12 0c7 0 12 4 12 10 0 4-3 6-6 6-2 0-3-1-4-1 5-5 2-11-2-15z" fill="#63d56b" /><path d="M0 12c1-5 9-7 12-2-4 0-4 10 10 8-3 5-7 6-10 6C5 24 0 19 0 12z" fill="#1573c4" /><path d="M0 16h12v8H0z" fill="#c9790d" /><path d="M3.500 16v-1.500h5V16 M0 19.500h12" stroke="#7b4506" /><path d="M5 18.500h2v2.500H5z" fill="#fbd060" /></> },
  { run: 1, el: <><path d="M1 4a1 1 0 0 1 1-1h7l2 2h11v4H1z" fill="#e3a008" /><path d="M1 6h22v15H1z" fill="#fdd663" /><path d="M5 14a1 1 0 0 1 1-1h12a1 1 0 0 1 1 1v7h-4v-4H9v4H5z" fill="#3b93dc" /></> },
  { el: <><path d="M7 5V2h10v3" stroke="#2aa9ea" strokeWidth="1.600" /><path d="M.5 5h23v16a3 3 0 0 1-3 3h-17a3 3 0 0 1-3-3z" fill="#f5f7f9" /><path d="M7.500 9.500h4v4h-4z" fill="#e8502d" /><path d="M12.500 9.500h4v4h-4z" fill="#7fba00" /><path d="M7.500 14.500h4v4h-4z" fill="#199fe9" /><path d="M12.500 14.500h4v4h-4z" fill="#fab803" /></> },
  { el: <><path d="M0 9l12-8 12 8v4H0z" fill="#0f5ea8" /><path d="M2 9h20l-4 8H6z" fill="#f1f1f1" /><path d="M0 9.500l12 7.500 12-7.500V23H0z" fill="#2aa4ea" /><path d="M0 23l24-13.500V23z" fill="#45c4f4" /></> },
  { el: <><rect x="3" y="0" width="18" height="24" rx="1.500" fill="#7d8893" /><path d="M5 2h14v4.500H5z" fill="#53d2f4" /><path d="M5 8h4v4H5z M10 8h4v4h-4z M15 8h4v4h-4z M5 13h4v4H5z M10 13h4v4h-4z M5 18h4v4H5z M10 18h4v4h-4z" fill="#d9dee3" /><path d="M15 13h4v9h-4z" fill="#174f93" /></> },
  { run: 1, el: <><circle cx="12" cy="12" r="12" fill="#f8c718" /><path d="M12 12L1.600 6A12 12 0 0 1 22.400 6z" fill="#e33b2e" /><path d="M12 12L1.600 6A12 12 0 0 0 12 24l5-9z" fill="#23a455" /><path d="M12 6h10.400L23 8H12z" fill="#e33b2e" /><circle cx="12" cy="12" r="5.600" fill="#fff" /><circle cx="12" cy="12" r="4.500" fill="#3a7ee8" /></> },
  { el: powerBi },
  { run: 1, el: <><path d="M0 7.500h5v14H0z M5 6h5v16H5z" fill="#e4e6e8" stroke="#333" strokeWidth=".7" /><path d="M1.500 10v9 M7 8v12" stroke="#8a8f94" strokeWidth="1" /><path d="M9.500 0h13v12h-13z" fill="#e8e8e0" stroke="#333" strokeWidth=".7" /><path d="M11.500 2h9v8h-9z" fill="#1b49c4" /><path d="M12.500 9l6-6.500h-5z" fill="#74c8ff" /><path d="M14 12h5v2h-5z M11 13.500h11v2H11z" fill="#bbb" /><circle cx="13" cy="18.500" r="5" fill="#e4f2ea" stroke="#555" /><path d="M13 18l3-4" stroke="#58b84c" strokeWidth="1.500" /><circle cx="13" cy="18.500" r="1.500" fill="#444" /></> },
  { run: 1, el: <><path d="M1 15C-1 8 8 1 16 5c6 3 7 10 3 14-3 4-8 4-8 1 0-4-2-2-5-2-3 0-4-1-5-3z" fill="#b9dcf0" stroke="#6e98b5" /><circle cx="5" cy="12" r="2" fill="#db4535" /><circle cx="9" cy="8.500" r="2" fill="#5bb045" /><circle cx="14.500" cy="7.500" r="2" fill="#3e79d7" /><circle cx="10" cy="14.500" r="2" fill="#24425b" /><path d="M13 23l7-19" stroke="#e08c24" strokeWidth="2" /><path d="M19 5l-1-4 5 1-2 4z" fill="#c48d55" /></> },
  { run: 1, el: <><rect x="1" y="1" width="22" height="22" rx="2.500" fill="#2263c9" /><path d="M1 4a3 3 0 0 1 3-3h7v10L1 22z" fill="#238bdd" /><path d="M1 19l9-9c1.500-1.500 3-1.500 4.500 0L23 19v2a2 2 0 0 1-2 2H3a2 2 0 0 1-2-2z" fill="#37b7f1" /><path d="M12 13l3-2 8 8v3z" fill="#82dffb" /><circle cx="17" cy="5.500" r="2" fill="#fff" /></> },
  { run: 1, active: 1, el: powerBi },
];

function Taskbar() {
  return (
    <div className="flex h-[41px] shrink-0 border-t border-black bg-linear-to-r from-[#20383f] via-[#1f3441] to-[#1a2745] text-white">
      <Ic x={0} y={728} w={48} h={40}>
        <path d="M16 742.300l6.700-1v6.300H16z M23.600 741.200l8.400-1.200v7.600h-8.400z M16 748.500h6.700v6.300l-6.700-1z M23.600 748.500h8.400v7.600l-8.400-1.200z" fill="#fff" />
      </Ic>
      <div className="flex h-full w-[288px] items-center border border-[#b5b5b5] bg-[#f1f1f1] text-[14.300px] text-[#2b2b2b]">
        <Ic x={49} y={728} w={39} h={38}>
          <circle cx="70.500" cy="745.500" r="5.500" stroke="#222" strokeWidth="1.200" />
          <path d="M66.500 750l-6 6" stroke="#222" strokeWidth="1.300" />
        </Ic>
        <span className="pt-0.5 tracking-[-0.2px]">Type here to search</span>
      </div>
      <Ic x={337} y={728} w={50} h={40}>
        <path d="M353.500 740v3h10v-3 M353.500 745h10v6h-10z M353.500 756v-3h10v3 M367.500 740v3 M367.500 749v7" stroke="#fff" strokeWidth="1.200" />
        <path d="M366 744h3v3.500h-3z" fill="#fff" />
      </Ic>
      <div className="flex">
        {apps.map((a, i) => (
          <div key={i} className={`flex w-[49px] flex-col items-center pt-2 ${a.active ? "bg-white/20" : ""}`}>
            <Ic w={24} h={24}>{a.el}</Ic>
            <div className={`mt-auto h-0.5 ${a.active ? "w-full" : "w-10"} ${a.run ? "bg-[#76b9ed]" : ""}`} />
          </div>
        ))}
      </div>
      <div className="ml-auto flex items-center">
        <Ic x={980} y={728} w={40} h={40}>
          <circle cx="1000" cy="746.500" r="9.800" fill="#fba61c" />
          <path d="M992 752a9.800 9.800 0 0 0 16 0z" fill="#f3702a" />
          <path d="M990 741.500h12 M988 746h18 M989 751.500h19" stroke="#ffe487" strokeWidth="1.600" />
          <circle cx="1006" cy="742" r="6" fill="#c42b1c" />
          <path d="M1004.500 740.500l1.700-1.200v5.500" stroke="#fff" />
        </Ic>
        <span className="w-[49px] text-[13.500px] tracking-[-0.3px]">30°C</span>
        <Ic x={1069} y={728} w={144} h={40}>
          <g stroke="#fff" strokeWidth="1.200">
            <path d="M1075.500 751.500l5.500-5.500 5.500 5.500" />
            <path d="M1103 744.500h8.500v8h-9.500v-2 M1112.500 747v3 M1097.500 743.500h5v2.500l-1.500 1.500h-2l-1.500-1.500z M1100 747.500v4h3 M1098.500 743v-2 M1101.500 743v-2" />
            <path d="M1104 746.500h3v4h-3z" fill="#fff" stroke="none" />
            <path d="M1124.500 744.500h6.500v8h-6.500z M1131 747l3.500-1.500v6l-3.500-1.500 M1125 741c3-1.500 5-1.500 8 0 M1125 755.500c3 1.500 5 1.500 8 0" />
            <path d="M1156 753.500h-9.500l-1-10 14.500-2.500v8 M1149.500 746.500c2-2 4-1 5 .5v-2 M1154 749.500c-2 2-4 1-5-.5v2" />
            <path d="M1172 754c0-5.500 5-10 11-10 M1175.500 754.500c0-4 3.500-7 7.500-7 M1179 754.500c0-2 1.500-3.500 4-3.500" />
            <path d="M1193.500 745.500h2l3.500-3.500v12l-3.500-3.500h-2z M1201 745.500c1.500 1.500 1.500 4 0 5.500 M1203.500 743.500c2.500 2.500 2.500 7 0 9.500" />
          </g>
          <path d="M1206 741.500c3 3.500 3 10 0 13.500" stroke="#8d98a8" />
          <circle cx="1182.500" cy="754" r="1.300" fill="#fff" />
          <circle cx="1157.500" cy="752.500" r="4" fill="#ff9a17" />
        </Ic>
        <div className="w-[36px] text-center text-[11.500px] leading-[18px] tracking-[-0.3px]">ENG<br />IN</div>
        <div className="w-[64px] text-center text-[11.500px] leading-[18px] whitespace-nowrap tracking-[-0.2px]">12:19 PM<br />11/25/2023</div>
        <div className="relative w-[53px]">
          <Ic x={1313} y={728} w={53} h={40}>
            <path d="M1325 740h16v12h-9l-3 3.500v-3.500h-4z" fill="#fff" />
            <path d="M1328 743.500h10 M1328 746.500h10 M1328 749.500h7" stroke="#1b2a45" />
            <circle cx="1340.500" cy="755" r="8" fill="#3a3f47" stroke="#8b9099" />
            <path d="M1361.500 728v40" stroke="#7b8494" />
          </Ic>
          <span className="absolute top-[19px] left-[24px] text-[12px] leading-4">2</span>
        </div>
      </div>
    </div>
  );
}

export default function App() {
  return (
    <div className="flex h-[768px] w-[1366px] flex-col overflow-hidden bg-white font-['Open_Sans','Noto_Sans',sans-serif]">
      <TitleBar />
      <Ribbon />
      <div className="flex h-[543px] shrink-0">
        <Rail />
        <div className="flex w-[963px] shrink-0 flex-col">
          <Report />
          <PageTabs />
        </div>
        <Visualizations />
        <DataPane />
      </div>
      <StatusBar />
      <Taskbar />
    </div>
  );
}
